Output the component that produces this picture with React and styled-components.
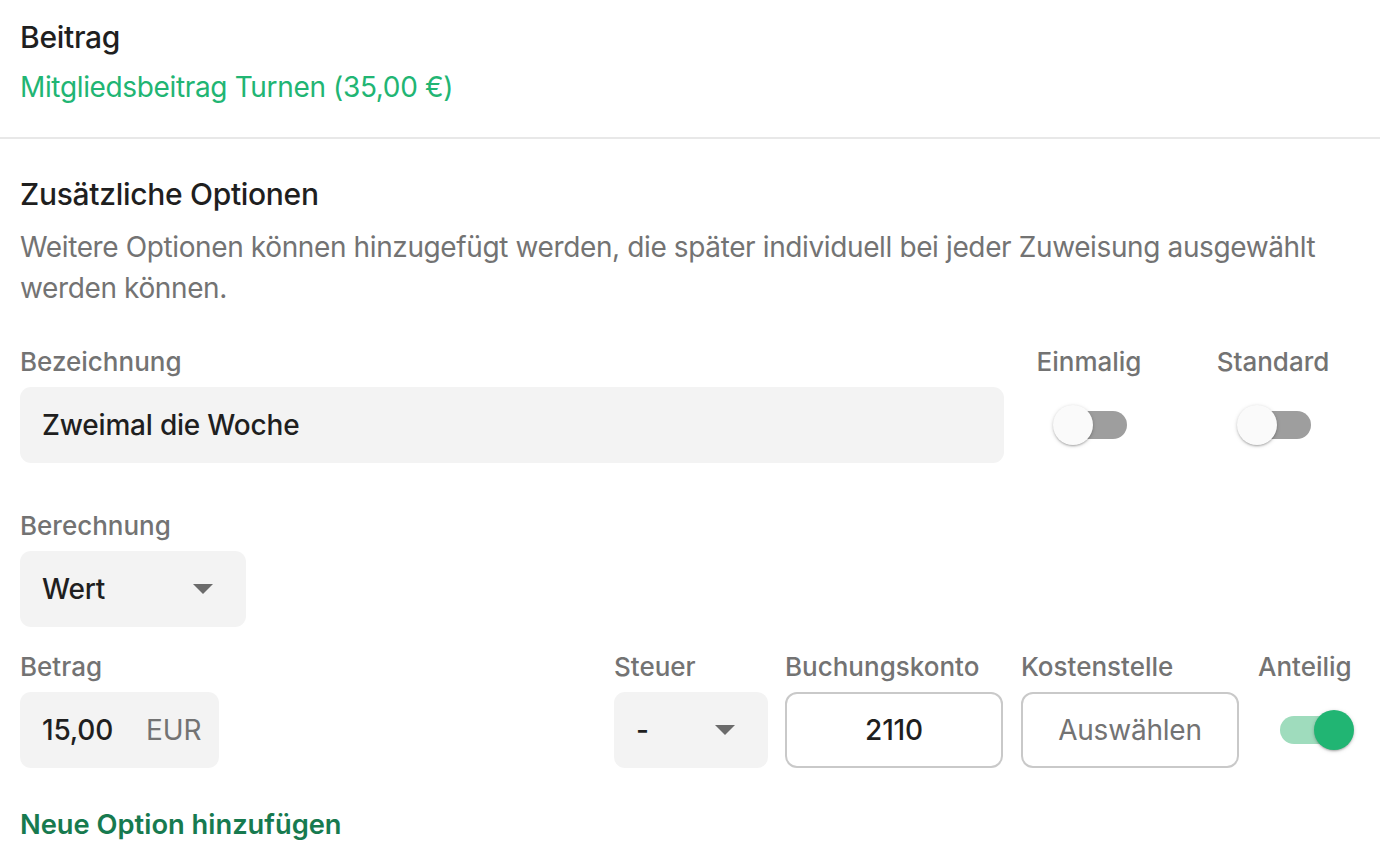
import React from "react";
import styled, { createGlobalStyle } from "styled-components";

const Global = createGlobalStyle`
  html, body { margin: 0; padding: 0; background: #fff; }
  body { font-family: Inter, "Noto Sans", sans-serif; color: #1f1f1f; -webkit-font-smoothing: antialiased; }
  * { box-sizing: border-box; }
`;

const Page = styled.div`
  width: 1380px;
`;

const Header = styled.section`
  padding: 19px 20px 32px;
  border-bottom: 2px solid #e8e8e8;
`;

const Title = styled.h2`
  margin: 0;
  font-size: 30px;
  line-height: 36px;
  font-weight: 500;
  letter-spacing: -0.3px;
  color: #1f1f1f;
`;

const FeeName = styled.div`
  margin-top: 14px;
  font-size: 28px;
  line-height: 36px;
  letter-spacing: -0.35px;
  color: #21b573;
`;

const Options = styled.section`
  padding: 37px 26px 0 20px;
`;

const Description = styled.p`
  margin: 15px 0 0;
  font-size: 28px;
  line-height: 41px;
  letter-spacing: -0.38px;
  color: #737373;
  max-width: 1330px;
`;

const Row = styled.div`
  display: flex;
  align-items: flex-start;
  margin-top: ${(p) => p.$top}px;
`;

const Field = styled.div`
  display: flex;
  flex-direction: column;
  width: ${(p) => (p.$w ? `${p.$w}px` : "auto")};
  margin-left: ${(p) => p.$ml || 0};
  align-items: ${(p) => p.$align || "stretch"};
`;

const Label = styled.label`
  display: block;
  font-size: 26px;
  line-height: 30px;
  font-weight: 500;
  color: #737373;
  white-space: nowrap;
  margin-bottom: 11px;
  position: relative;
  top: 1px;
`;

const Box = styled.div`
  height: 76px;
  border-radius: 11px;
  display: flex;
  align-items: center;
  padding: 0 22px;
  font-size: 28px;
  font-weight: 500;
  letter-spacing: -0.2px;
  color: #1f1f1f;
  background: #f3f3f3;
`;

const OutlineBox = styled.div`
  height: 76px;
  border-radius: 12px;
  border: 2px solid #c9c9c9;
  display: flex;
  align-items: center;
  justify-content: center;
  font-size: 28px;
  letter-spacing: -0.2px;
  font-weight: ${(p) => (p.$muted ? 400 : 500)};
  color: ${(p) => (p.$muted ? "#737373" : "#1f1f1f")};
  background: #fff;
`;

const SelectBox = styled(Box)`
  justify-content: space-between;
  padding-right: 33px;
`;

const Caret = styled.span`
  width: 0;
  height: 0;
  border-left: 10.5px solid transparent;
  border-right: 10.5px solid transparent;
  border-top: 10px solid #6b6b6b;
`;

const Unit = styled.span`
  margin-left: 33px;
  font-weight: 400;
  color: #737373;
`;

const SwitchWrap = styled.div`
  height: 76px;
  display: flex;
  align-items: center;
  justify-content: ${(p) => (p.$start ? "flex-start" : "center")};
  padding-left: ${(p) => (p.$start ? "22px" : "2px")};
`;

const Switch = styled.div`
  position: relative;
  width: 74px;
  height: 42px;
`;

const Track = styled.div`
  position: absolute;
  left: ${(p) => (p.$on ? "0" : "2px")};
  right: ${(p) => (p.$on ? "2px" : "0")};
  top: 7px;
  height: 28px;
  border-radius: 14px;
  background: ${(p) => (p.$on ? "#9fdcbd" : "#9e9e9e")};
`;

const Thumb = styled.div`
  position: absolute;
  top: 1px;
  ${(p) => (p.$on ? "right: 0;" : "left: 0;")}
  width: 40px;
  height: 40px;
  border-radius: 50%;
  background: ${(p) => (p.$on ? "#21b573" : "#fafafa")};
  box-shadow: 0 2px 2px -1px rgba(0,0,0,0.2), 0 1px 3px rgba(0,0,0,0.14), 0 1px 5px rgba(0,0,0,0.1);
`;

const Toggle = ({ on }) => (
  <Switch>
    <Track $on={on} />
    <Thumb $on={on} />
  </Switch>
);

const AddLink = styled.a`
  display: block;
  margin-top: 39px;
  font-size: 27.3px;
  line-height: 36px;
  font-weight: 600;
  color: #177a4f;
  text-decoration: none;
  cursor: pointer;
`;

export default function App() {
  return (
    <Page>
      <Global />
      <Header>
        <Title>Beitrag</Title>
        <FeeName>Mitgliedsbeitrag Turnen (35,00 €)</FeeName>
      </Header>
      <Options>
        <Title>Zusätzliche Optionen</Title>
        <Description>
          Weitere Optionen können hinzugefügt werden, die später individuell bei jeder Zuweisung ausgewählt werden können.
        </Description>

        <Row $top={37}>
          <Field $w={984}>
            <Label>Bezeichnung</Label>
            <Box>Zweimal die Woche</Box>
          </Field>
          <Field $w={104} $ml="33px" $align="center">
            <Label>Einmalig</Label>
            <SwitchWrap>
              <Toggle />
            </SwitchWrap>
          </Field>
          <Field $w={114} $ml="75px" $align="center">
            <Label>Standard</Label>
            <SwitchWrap>
              <Toggle />
            </SwitchWrap>
          </Field>
        </Row>

        <Row $top={47}>
          <Field $w={226}>
            <Label>Berechnung</Label>
            <SelectBox>
              <span>Wert</span>
              <Caret />
            </SelectBox>
          </Field>
        </Row>

        <Row $top={24}>
          <Field $w={199}>
            <Label>Betrag</Label>
            <Box>
              15,00<Unit>EUR</Unit>
            </Box>
          </Field>
          <Field $w={154} $ml="auto">
            <Label>Steuer</Label>
            <SelectBox>
              <span>-</span>
              <Caret />
            </SelectBox>
          </Field>
          <Field $w={218} $ml="17px">
            <Label>Buchungskonto</Label>
            <OutlineBox>2110</OutlineBox>
          </Field>
          <Field $w={218} $ml="18px">
            <Label>Kostenstelle</Label>
            <OutlineBox $muted>Auswählen</OutlineBox>
          </Field>
          <Field $w={96} $ml="19px">
            <Label>Anteilig</Label>
            <SwitchWrap $start>
              <Toggle on />
            </SwitchWrap>
          </Field>
        </Row>

        <AddLink>Neue Option hinzufügen</AddLink>
      </Options>
    </Page>
  );
}
